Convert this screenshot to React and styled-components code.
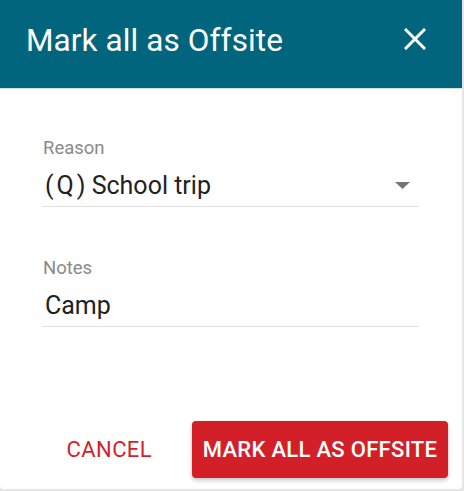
import React from "react";
import styled, { createGlobalStyle } from "styled-components";

const Global = createGlobalStyle`
  html, body { margin: 0; padding: 0; background: #e6e6e6; }
  body { font-family: Roboto, "Noto Sans", Arial, sans-serif; }
  * { box-sizing: border-box; }
`;

const Dialog = styled.div`
  width: 462px;
  height: 489px;
  background: #ffffff;
  border-radius: 0 0 4px 4px;
  display: flex;
  flex-direction: column;
  overflow: hidden;
`;

const Header = styled.div`
  height: 89px;
  background: #01667d;
  color: #ffffff;
  display: flex;
  align-items: center;
  justify-content: space-between;
  padding: 0 32px 0 26px;
  border-bottom: 1px solid #cfe3e8;
`;

const Title = styled.h2`
  margin: 0;
  font-size: 31.5px;
  font-weight: 400;
  letter-spacing: 0.1px;
  padding-bottom: 8px;
`;

const CloseButton = styled.button`
  border: 0;
  background: none;
  padding: 0;
  width: 30px;
  height: 30px;
  display: flex;
  align-items: center;
  justify-content: center;
  color: #fff;
  margin-bottom: 10px;
`;

const Body = styled.div`
  flex: 1;
  padding: 48px 43px 0 42px;
  display: flex;
  flex-direction: column;
  gap: 50px;
`;

const Field = styled.div`
  display: flex;
  flex-direction: column;
`;

const Label = styled.label`
  font-size: 18.5px;
  color: #8a8a8a;
  line-height: 22px;
  padding-left: 1px;
`;

const Control = styled.div`
  display: flex;
  align-items: center;
  justify-content: space-between;
  height: 48px;
  border-bottom: 1.5px solid #e2e2e2;
  font-size: 25px;
  color: #212121;
  padding: 5px 9px 0 3px;
`;

const Code = styled.span`
  letter-spacing: 3px;
`;

const Actions = styled.div`
  display: flex;
  justify-content: flex-end;
  align-items: center;
  gap: 40px;
  padding: 0 14px 11px 0;
`;

const TextButton = styled.button`
  border: 0;
  background: none;
  color: ${(p) => p.$color};
  font-family: Roboto, Arial, sans-serif;
  font-size: 22px;
  font-weight: 400;
  letter-spacing: 0.4px;
  padding: 0;
`;

const PrimaryButton = styled.button`
  border: 0;
  background: #d31f27;
  color: #fff;
  font-family: Roboto, Arial, sans-serif;
  font-size: 22px;
  font-weight: 500;
  letter-spacing: 0.3px;
  height: 57px;
  width: 256px;
  padding: 0;
  border-radius: 4px;
  box-shadow: 0 2px 4px rgba(0,0,0,0.25);
`;

export default function App() {
  return (
    <>
      <Global />
      <Dialog>
        <Header>
          <Title>Mark all as Offsite</Title>
          <CloseButton aria-label="close">
            <svg width="22" height="22" viewBox="0 0 22 22">
              <path d="M2 2 L20 20 M20 2 L2 20" stroke="#fff" strokeWidth="3" strokeLinecap="square" />
            </svg>
          </CloseButton>
        </Header>
        <Body>
          <Field>
            <Label>Reason</Label>
            <Control>
              <span><Code>(Q</Code>) School trip</span>
              <svg width="15" height="7" viewBox="0 0 15 7">
                <path d="M0 0 L15 0 L7.5 7 Z" fill="#757575" />
              </svg>
            </Control>
          </Field>
          <Field>
            <Label>Notes</Label>
            <Control>
              <span>Camp</span>
            </Control>
          </Field>
        </Body>
        <Actions>
          <TextButton $color="#d31f27">CANCEL</TextButton>
          <PrimaryButton>MARK ALL AS OFFSITE</PrimaryButton>
        </Actions>
      </Dialog>
    </>
  );
}
